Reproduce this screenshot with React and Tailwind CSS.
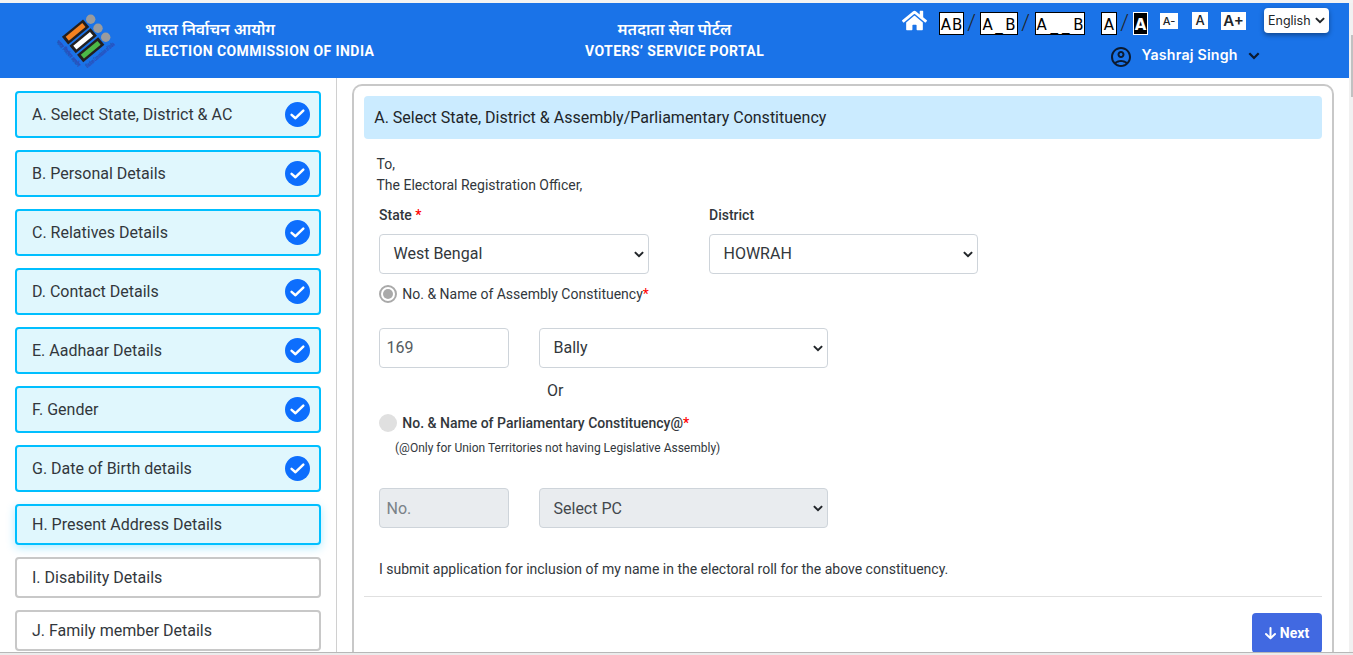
import { FaHome } from "react-icons/fa";
import { MdOutlineAccountCircle } from "react-icons/md";

const steps = [
  { label: "A. Select State, District & AC", state: "done" },
  { label: "B. Personal Details", state: "done" },
  { label: "C. Relatives Details", state: "done" },
  { label: "D. Contact Details", state: "done" },
  { label: "E. Aadhaar Details", state: "done" },
  { label: "F. Gender", state: "done" },
  { label: "G. Date of Birth details", state: "done" },
  { label: "H. Present Address Details", state: "active" },
  { label: "I. Disability Details", state: "todo" },
  { label: "J. Family member Details", state: "todo" },
];

const stepStyles = {
  done: "h-[47px] border-[#00bfff] bg-[#e0f7fd]",
  active: "h-[41px] border-[#00bfff] bg-[#e0f7fd] shadow-[0_3px_10px_rgba(0,191,255,0.3)]",
  todo: "h-[41px] border-[#c8c8c8] bg-white",
};

function Chevron({ className }) {
  return (
    <svg viewBox="0 0 10 7" className={className} fill="none" stroke="currentColor" strokeWidth="2">
      <path d="M0.9 1.1 5 5.2 9.1 1.1" />
    </svg>
  );
}

const logoBars = [
  { x: 18.6, y: 20.9, fill: "#f58220" },
  { x: 26.2, y: 29.7, fill: "#ffffff" },
  { x: 33.7, y: 38.7, fill: "#4cb848" },
];

function Logo() {
  return (
    <svg viewBox="0 0 58 56" className="h-[56px] w-[58px] overflow-visible">
      <g fill="#999b9e">
        <circle cx="33.7" cy="8.3" r="4.7" />
        <circle cx="41" cy="17.2" r="4.7" />
        <circle cx="48.7" cy="26.2" r="4.7" />
      </g>
      {logoBars.map((b) => (
        <g key={b.fill} transform={`translate(${b.x} ${b.y}) rotate(-39.5)`}>
          <rect x="-13.7" y="-4.9" width="27.4" height="9.8" fill="#231f20" />
          <rect x="-10.8" y="-2.5" width="21.6" height="5" fill={b.fill} />
        </g>
      ))}
      <g fill="#2b4fb8" stroke="#2b4fb8" strokeWidth="0.3" className="font-['Noto_Sans',sans-serif] text-[5.4px] font-bold">
        <text transform="translate(-0.8 31.2) rotate(48.6)" textLength="33" lengthAdjust="spacingAndGlyphs">भारत निर्वाचन आयोग</text>
        <text transform="translate(30.5 57) rotate(-40)" textLength="36" lengthAdjust="spacingAndGlyphs">Election Commission of India</text>
      </g>
    </svg>
  );
}

function Slash() {
  return <span className="flex w-[15px] justify-center text-[22px] leading-[24px] font-light text-[#212529]">/</span>;
}

function SpacingBox({ children, className }) {
  return (
    <span className={"flex h-[23px] items-center justify-center border border-black pt-[3px] font-['DejaVu_Sans',sans-serif] text-[15px] leading-none " + className}>
      {children}
    </span>
  );
}

function Header() {
  return (
    <header className="flex h-[75px] w-[1349px] shrink-0 bg-[#1a73e8] text-white">
      <div className="w-[145px] pt-[8px] pl-[57px]">
        <Logo />
      </div>
      <div className="w-[440px] pt-[14px] text-[14px] leading-[24px] font-bold">
        <div className="h-[24px] pt-[2px] font-['Noto_Sans_Devanagari','Noto_Sans',sans-serif] text-[15.9px] font-semibold whitespace-nowrap">भारत निर्वाचन आयोग</div>
        <div className="-mt-[2px] tracking-[0.43px] whitespace-nowrap">ELECTION COMMISSION OF INDIA</div>
      </div>
      <div className="w-[179px] pt-[14px] text-center text-[14px] leading-[24px] font-bold">
        <div className="h-[24px] pt-[2px] font-['Noto_Sans_Devanagari','Noto_Sans',sans-serif] text-[15.9px] font-semibold whitespace-nowrap">मतदाता सेवा पोर्टल</div>
        <div className="-mt-[2px] tracking-[0.4px] whitespace-nowrap">VOTERS’ SERVICE PORTAL</div>
      </div>
      <div className="ml-[138px] flex flex-col pt-[5px]">
        <div className="flex items-start">
          <FaHome className="h-[25px] w-[25px]" />
          <SpacingBox className="mt-[4px] ml-[12px] w-[25px] gap-[1px] bg-white text-black"><span>A</span><span>B</span></SpacingBox>
          <span className="mt-[3px]"><Slash /></span>
          <SpacingBox className="mt-[4px] ml-px w-[38px] gap-[2.5px] bg-white text-black"><span>A</span><span>_</span><span>B</span></SpacingBox>
          <span className="mt-[3px]"><Slash /></span>
          <SpacingBox className="mt-[4px] ml-[2px] w-[50px] gap-[3.8px] bg-white text-black"><span>A</span><span>_</span><span>_</span><span>B</span></SpacingBox>
          <SpacingBox className="mt-[4px] ml-[16px] w-[16px] bg-white text-black">A</SpacingBox>
          <span className="mt-[3px]"><Slash /></span>
          <SpacingBox className="mt-[4px] ml-px w-[15px] border-white bg-black font-bold text-white">A</SpacingBox>
          <span className="mt-[5px] ml-[12px] flex h-[16px] w-[18px] items-center justify-center bg-white font-['Inter',sans-serif] text-[11px] font-medium text-[#212529]">A-</span>
          <span className="mt-[4px] ml-[14px] flex h-[17px] w-[16px] items-center justify-center bg-white font-['Inter',sans-serif] text-[13px] font-medium text-[#212529]">A</span>
          <span className="mt-[4px] ml-[13px] flex h-[18px] w-[25px] items-center justify-center bg-white pt-px font-['Inter',sans-serif] text-[15px] font-semibold text-[#212529]">A+</span>
          <span className="ml-[18px] flex h-[25px] w-[65px] items-center rounded-[4px] bg-white pl-[4px] font-['Inter',sans-serif] text-[12.5px] text-[#212529] shadow-[0_2px_5px_rgba(0,0,0,0.4)]">
            <span className="w-[47px] pt-px">English</span>
            <Chevron className="h-[7px] w-[10px]" />
          </span>
        </div>
        <div className="mt-[7px] flex h-[24px] items-center pl-[207px]">
          <MdOutlineAccountCircle className="mt-[5px] h-[24px] w-[24px] text-[#0b1a30]" />
          <span className="ml-[8.5px] w-[104px] pt-[2px] font-['Inter',sans-serif] text-[14.2px] font-semibold tracking-[0.2px] whitespace-nowrap">Yashraj Singh</span>
          <Chevron className="ml-[2px] mt-[4px] h-[8px] w-[12px] text-[#0b1a30]" />
        </div>
      </div>
    </header>
  );
}

function Sidebar() {
  return (
    <aside className="flex w-[337px] shrink-0 flex-col gap-3 border-r border-[#d0d0d0] pt-[13px] pl-[15px]">
      {steps.map((s) => (
        <div key={s.label} className={"flex w-[306px] shrink-0 items-center justify-between rounded-[4px] border-2 pr-[9px] pl-[15px] text-[16px] text-[#32373c] " + stepStyles[s.state]}>
          <span>{s.label}</span>
          {s.state === "done" && (
            <svg viewBox="0 0 25 25" className="h-[25px] w-[25px]">
              <circle cx="12.5" cy="12.5" r="12.5" fill="#0d6efd" />
              <path d="M6.6 12.9 10.5 16.2 18.3 8.6" fill="none" stroke="#fff" strokeWidth="2.5" strokeLinecap="round" strokeLinejoin="round" />
            </svg>
          )}
        </div>
      ))}
    </aside>
  );
}

function Select({ value, className }) {
  return (
    <div className={"flex h-[40px] items-center justify-between rounded-[4px] border border-[#ced4da] pr-[4px] pl-[13.5px] text-[16px] " + className}>
      <span>{value}</span>
      <Chevron className="mt-px h-[7px] w-[10px] text-[#212529]" />
    </div>
  );
}

function FormPanel() {
  return (
    <main className="ml-[15px] mt-[6px] w-[982px] shrink-0 rounded-t-[10px] border-2 border-b-0 border-[#c8c8c8] p-[10px] pb-0 text-[14px] leading-[21px] text-[#32373c]">
      <h1 className="flex h-[43px] items-center rounded-[4px] bg-[#cbebff] pl-[10.2px] text-[16px] text-[#212529]">
        A. Select State, District &amp; Assembly/Parliamentary Constituency
      </h1>
      <div className="mt-[15px] pl-[12.5px]">
        <p>To,</p>
        <p>The Electoral Registration Officer,</p>
      </div>
      <div className="flex flex-col pl-[15px]">
        <div className="mt-[9px] flex gap-[60px]">
          <div className="w-[270px]">
            <div className="font-medium">State <span className="text-[#ff0000]">*</span></div>
            <Select value={<span className="block pb-[2px]">West Bengal</span>} className="mt-[8px]" />
          </div>
          <div className="w-[269px]">
            <div className="font-medium">District</div>
            <Select value={<span className="block pb-[2px]">HOWRAH</span>} className="mt-[8px]" />
          </div>
        </div>
        <div className="mt-[10px] flex h-[21px] items-center">
          <span className="mb-[2px] flex h-[18px] w-[18px] items-center justify-center rounded-full border-2 border-[#a9a9a9]">
            <span className="h-[10px] w-[10px] rounded-full bg-[#a9a9a9]" />
          </span>
          <span className="ml-[5.3px]">No. &amp; Name of Assembly Constituency<span className="text-[#ff0000]">*</span></span>
        </div>
        <div className="mt-[23px] flex gap-[30px]">
          <div className="flex h-[40px] w-[130px] items-center rounded-[4px] border border-[#ced4da] pb-[2px] pl-[6.5px] text-[16px] text-[#555b61]">169</div>
          <Select value={<span className="block pb-[2px]">Bally</span>} className="w-[289px]" />
        </div>
        <div className="mt-[12px] pl-[168px] text-[16px]">Or</div>
        <div className="mt-[12px] flex h-[21px] items-center">
          <span className="mb-[2px] h-[18px] w-[18px] rounded-full bg-[#e0e0e0]" />
          <span className="ml-[5.3px] font-medium">No. &amp; Name of Parliamentary Constituency@<span className="text-[#ff0000]">*</span></span>
        </div>
        <div className="mt-[5px] pl-[16px] text-[12px] leading-[18px]">(@Only for Union Territories not having Legislative Assembly)</div>
        <div className="mt-[31px] flex gap-[30px]">
          <div className="flex h-[40px] w-[130px] items-center rounded-[4px] border border-[#ced4da] bg-[#e9ecef] pl-[6.5px] text-[16px] text-[#7a8288]">No.</div>
          <Select value="Select PC" className="w-[289px] bg-[#e9ecef] text-[#43484d]" />
        </div>
        <p className="mt-[31px]">I submit application for inclusion of my name in the electoral roll for the above constituency.</p>
      </div>
      <div className="mt-[16px] flex justify-end border-t border-[#e0e0e0] pt-[16px]">
        <button className="flex h-[40px] w-[70px] items-center justify-center gap-[4px] rounded-[4px] bg-[#4169e1] text-[14px] font-bold text-white">
          <svg viewBox="0 0 11 13" className="h-[13px] w-[11px]" fill="none" stroke="currentColor" strokeWidth="2" strokeLinecap="round" strokeLinejoin="round">
            <path d="M5.5 1V11.2M1 7l4.5 4.4L10 7" />
          </svg>
          Next
        </button>
      </div>
    </main>
  );
}

export default function App() {
  return (
    <div className="flex h-[655px] w-[1353px] flex-col overflow-hidden bg-white font-['Roboto',sans-serif]">
      <div className="h-[3px] shrink-0 bg-[#f3f3f3]" />
      <div className="flex h-[649px] shrink-0 overflow-hidden">
        <div className="flex w-[1349px] shrink-0 flex-col overflow-hidden">
          <Header />
          <div className="flex min-h-0 flex-1 overflow-hidden">
            <Sidebar />
            <FormPanel />
          </div>
        </div>
        <div className="flex w-[4px] shrink-0 justify-end bg-[#f1f1f1] pt-[32px]">
          <div className="h-[62px] w-[2px] bg-[#c1c1c1]" />
        </div>
      </div>
      <div className="h-[3px] shrink-0 border-t border-[#b8b8b8] bg-[#ececec]" />
    </div>
  );
}
